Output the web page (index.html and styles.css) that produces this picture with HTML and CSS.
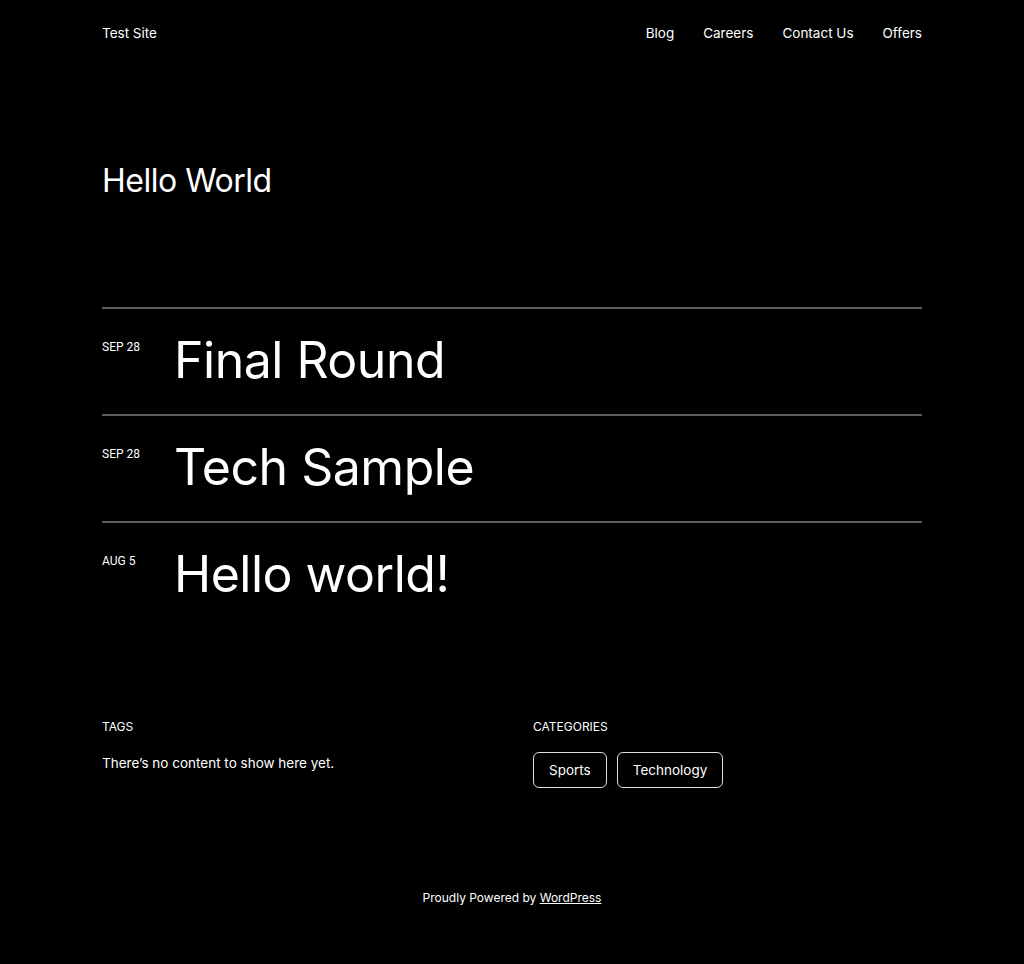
FILE: index.html
```html
<!DOCTYPE html>
<html lang="en">
<head>
<meta charset="utf-8">
<title>Test Site</title>
<link rel="stylesheet" href="styles.css">
</head>
<body>
<div class="page">
  <header class="site-header">
    <a class="site-title" href="#">Test Site</a>
    <nav class="site-nav">
      <a href="#">Blog</a>
      <a href="#">Careers</a>
      <a href="#">Contact Us</a>
      <a href="#">Offers</a>
    </nav>
  </header>

  <main>
    <h1 class="page-title">Hello World</h1>

    <ul class="post-list">
      <li class="post-row">
        <span class="post-date">SEP 28</span>
        <a class="post-title" href="#">Final Round</a>
      </li>
      <li class="post-row">
        <span class="post-date">SEP 28</span>
        <a class="post-title" href="#">Tech Sample</a>
      </li>
      <li class="post-row">
        <span class="post-date">AUG 5</span>
        <a class="post-title" href="#">Hello world!</a>
      </li>
    </ul>

    <section class="taxonomies">
      <div class="tax-col">
        <h2 class="tax-heading">TAGS</h2>
        <p class="tax-empty">There’s no content to show here yet.</p>
      </div>
      <div class="tax-col">
        <h2 class="tax-heading">CATEGORIES</h2>
        <div class="tax-buttons">
          <a class="tax-btn" href="#">Sports</a>
          <a class="tax-btn" href="#">Technology</a>
        </div>
      </div>
    </section>
  </main>

  <footer class="site-footer">
    Proudly Powered by <a href="#">WordPress</a>
  </footer>
</div>
</body>
</html>
```

FILE: styles.css
```css
html, body {
  margin: 0;
  padding: 0;
  background: #000;
  color: #fff;
}
body {
  font-family: "Inter", "Liberation Sans", sans-serif;
}
a {
  color: inherit;
  text-decoration: none;
}
.page {
  width: 820px;
  margin: 0 auto;
}
.site-header {
  display: flex;
  justify-content: space-between;
  align-items: center;
  height: 65px;
  padding-bottom: 1px;
}
.site-title {
  font-size: 13.5px;
}
.site-nav {
  display: flex;
  gap: 29px;
  font-size: 13.5px;
}
.page-title {
  margin: 96px 0 0;
  font-weight: 400;
  font-size: 32px;
  line-height: 38px;
  letter-spacing: -0.5px;
}
.post-list {
  list-style: none;
  margin: 107px 0 0;
  padding: 0;
}
.post-row {
  display: flex;
  align-items: flex-start;
  border-top: 2px solid #5c5c5c;
  height: 105px;
}
.post-date {
  width: 72px;
  flex: none;
  font-size: 12px;
  margin-top: 31px;
  line-height: 14px;
  font-family: "Roboto", "Liberation Sans", sans-serif;
}
.post-title {
  font-size: 50px;
  line-height: 60px;
  margin-top: 21px;
  letter-spacing: -0.5px;
}
.taxonomies {
  display: grid;
  grid-template-columns: 389px 389px;
  gap: 42px;
  margin-top: 91px;
}
.tax-heading {
  margin: 0;
  font-weight: 400;
  font-size: 12px;
  line-height: 16px;
}
.tax-empty {
  margin: 18px 0 0;
  font-size: 13.5px;
  line-height: 20px;
}
.tax-buttons {
  display: flex;
  gap: 10px;
  margin-top: 17px;
}
.tax-btn {
  border: 1px solid #ddd;
  border-radius: 6px;
  padding: 0 15px;
  height: 34px;
  display: flex;
  align-items: center;
  font-size: 13.5px;
}
.site-footer {
  text-align: center;
  font-size: 12px;
  margin-top: 102px;
  padding-bottom: 60px;
}
.site-footer a {
  text-decoration: underline;
}
```
